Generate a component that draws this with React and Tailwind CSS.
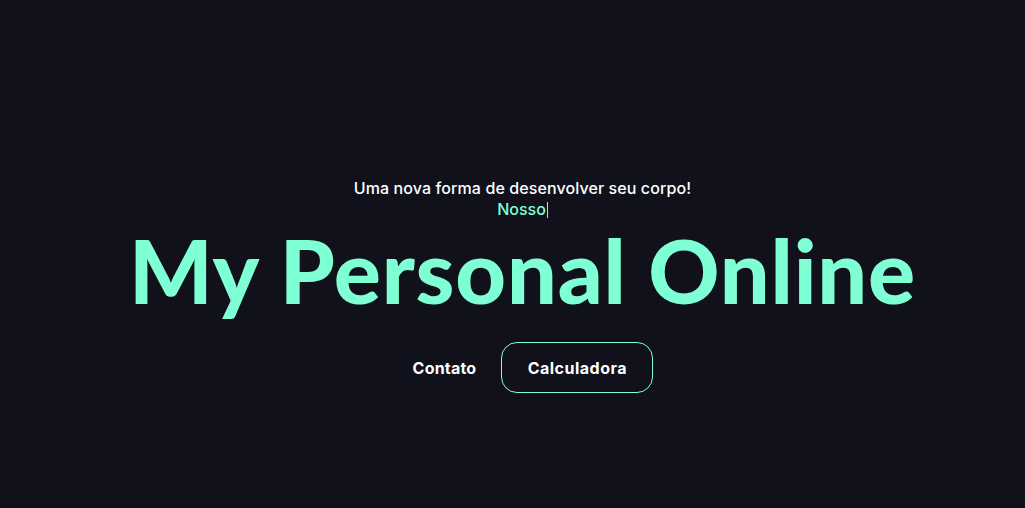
export default function App() {
  return (
    <div className="min-h-screen h-[508px] w-full bg-[#10111a] flex flex-col items-center pl-[20px] pt-[178px]" style={{ fontFamily: 'Inter, Lato, sans-serif' }}>
      <p className="text-white text-[16px] font-medium leading-[21px] tracking-[0.1px]">Uma nova forma de desenvolver seu corpo!</p>
      <p className="text-[#7fffd4] text-[16px] font-medium leading-[21px] flex items-center">
        Nosso<span className="inline-block w-[1px] h-[16px] bg-[#7fffd4] ml-[1px]"></span>
      </p>
      <h1 className="text-[#7fffd4] text-[88px] font-black leading-[100px] tracking-[0.8px]" style={{ fontFamily: 'Lato, sans-serif' }}>My Personal Online</h1>
      <div className="flex items-center gap-[25px] mt-[22px] pl-[21px]">
        <a className="text-white text-[16px] font-bold tracking-[0.2px]">Contato</a>
        <button className="text-white text-[16px] font-bold tracking-[0.5px] border border-[#7fffd4] rounded-[16px] w-[152px] h-[51px]">Calculadora</button>
      </div>
    </div>
  );
}
